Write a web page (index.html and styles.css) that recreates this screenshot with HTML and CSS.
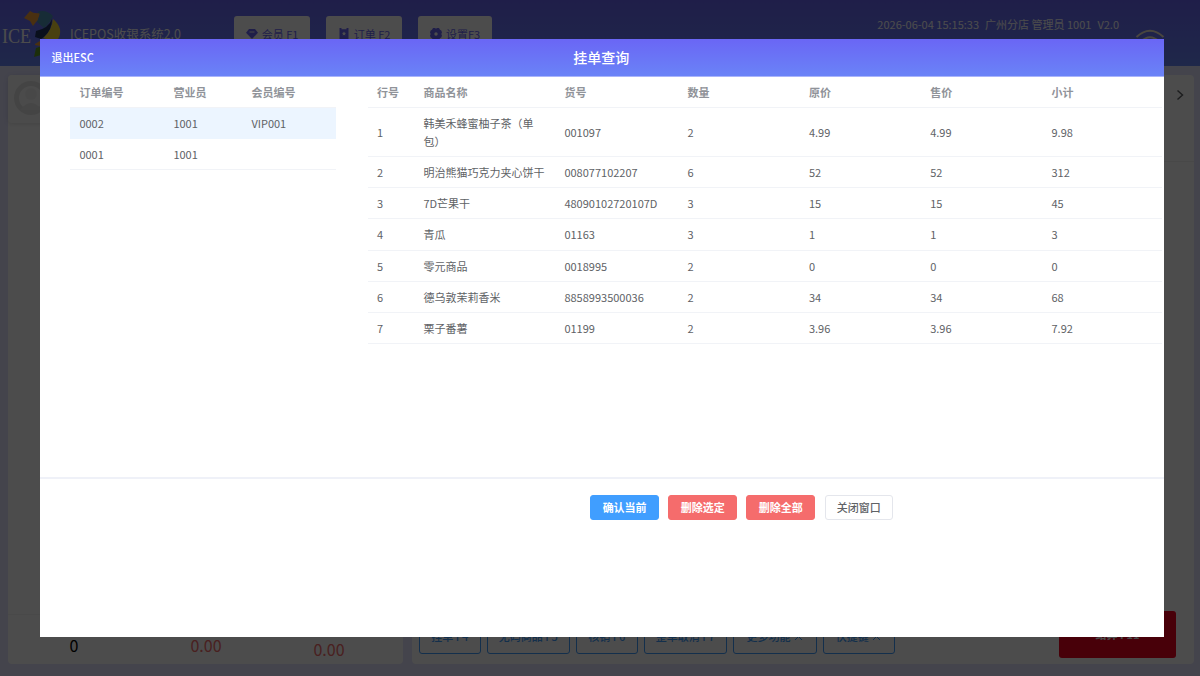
FILE: index.html
```html
<!DOCTYPE html>
<html lang="zh-CN">
<head>
    <meta charset="UTF-8">
    <meta name="viewport" content="width=device-width, initial-scale=1.0">
    <title>ICEPOS收银系统2.0</title>
    <link rel="stylesheet" href="styles.css">
</head>
<body>
    <div class="app">
        <header class="topbar">
            <div class="logo">
                <span class="logo-text">ICE</span>
                <svg class="logo-mark" width="38" height="50" viewBox="0 0 38 50">
                    <path d="M0 8L6 1Q10 4 16 3L14 10L12 12L9 16L6 11Z" fill="#f5a13a"/>
                    <path d="M13 2Q22-1 29 6Q26 13 20 18L13 12L16 4Z" fill="#4f93b4"/>
                    <path d="M29 9Q34 13 36 19Q37 26 33 30Q27 31 19 28Q28 20 29 9Z" fill="#f4d836"/>
                    <path d="M28 9Q25 18 12 21L11 27L17 29L20 27Q28 20 28 9Z" fill="#20345e"/>
                    <path d="M11 34L16 31V36L11 35Z" fill="#f5a13a"/>
                    <path d="M12 38L18 36L17 45L10 47Z" fill="#5f9c22"/>
                </svg>
            </div>
            <h1 class="app-title">ICEPOS收银系统2.0</h1>
            <nav class="nav">
                <button type="button" class="nav-btn">
                    <svg width="12" height="12" viewBox="0 0 12 12"><path d="M3 1h6l3 3.700-6 6.300L0 4.700z" fill="currentColor"/><path d="M3.500 4h5" stroke="#fff" stroke-width=".9"/></svg>
                    会员 F1
                </button>
                <button type="button" class="nav-btn">
                    <svg width="12" height="12" viewBox="0 0 12 12"><path d="M1.500 0h2v1.200h5V0h2v11h-9z" fill="currentColor"/><path d="M6 3.500l.7 1.300 1.300.2-1 1 .3 1.500L6 6.800l-1.300.7L5 6 4 5l1.300-.2z" fill="#fff"/></svg>
                    订单 F2
                </button>
                <button type="button" class="nav-btn nav-btn-set">
                    <svg width="12" height="12" viewBox="0 0 12 12"><path d="M3 0h2l1 .8L7 0h2l1 1.700 1.300.8.7 2-.7 1.500.7 1.500-.7 2-1.300.8L9 12H7l-1-.8-1 .8H3l-1-1.700-1.300-.8L0 7.500.7 6 0 4.500l.7-2L2 1.700z" fill="currentColor"/><circle cx="6" cy="6" r="1.700" fill="#fff"/></svg>
                    设置F3
                </button>
            </nav>
            <div class="session">
                <span>2026-06-04 15:15:33</span>
                <span>广州分店 管理员 1001</span>
                <span>V2.0</span>
            </div>
            <svg class="wifi" width="30" height="24" viewBox="0 0 30 24" fill="none" stroke="#f5ecd2" stroke-width="2">
                <path d="M1.500 8Q15-4.500 28.500 8M6 12.500Q15 4 24 12.500M10.500 17Q15 13 19.500 17"/>
            </svg>
        </header>

        <main class="workspace">
            <section class="panel cart">
                <div class="member">
                    <svg width="36" height="36" viewBox="0 0 36 36">
                        <circle cx="18" cy="18" r="14.500" fill="none" stroke="#e4e4e4" stroke-width="5"/>
                        <circle cx="18" cy="14" r="6" fill="#f2f2f2"/>
                        <path d="M7 30Q18 16 29 30" fill="#e9e9e9"/>
                    </svg>
                </div>
                <div class="totals">
                    <span class="total-qty">0</span>
                    <span class="total-price">0.00</span>
                    <span class="total-pay">0.00</span>
                </div>
            </section>
            <section class="panel goods">
                <div class="category">
                    <svg width="8" height="12" viewBox="0 0 8 12" fill="none" stroke="#606266" stroke-width="1.500"><path d="M1.500 1.500L6.500 6L1.500 10.500"/></svg>
                </div>
                <div class="actions">
                    <button type="button" class="action action-sm">挂单 F4</button>
                    <button type="button" class="action action-lg">无码商品 F5</button>
                    <button type="button" class="action action-sm">核销 F6</button>
                    <button type="button" class="action action-lg">整单取消 F7</button>
                    <button type="button" class="action action-lg">更多功能 <svg width="9" height="6" viewBox="0 0 9 6" fill="none" stroke="currentColor"><path d="M1 5L4.500 1.500L8 5"/></svg></button>
                    <button type="button" class="action action-md">快捷键 <svg width="9" height="6" viewBox="0 0 9 6" fill="none" stroke="currentColor"><path d="M1 5L4.500 1.500L8 5"/></svg></button>
                    <button type="button" class="checkout">结算 F11</button>
                </div>
            </section>
        </main>
    </div>

    <div class="overlay">
        <div class="dialog">
            <div class="dialog-header">
                <span class="dialog-exit">退出ESC</span>
                <h2 class="dialog-title">挂单查询</h2>
            </div>
            <div class="dialog-body">
                <table class="table orders">
                    <thead>
                        <tr><th>订单编号</th><th>营业员</th><th>会员编号</th></tr>
                    </thead>
                    <tbody>
                        <tr class="current"><td>0002</td><td>1001</td><td>VIP001</td></tr>
                        <tr><td>0001</td><td>1001</td><td></td></tr>
                    </tbody>
                </table>
                <table class="table items">
                    <thead>
                        <tr><th>行号</th><th>商品名称</th><th>货号</th><th>数量</th><th>原价</th><th>售价</th><th>小计</th></tr>
                    </thead>
                    <tbody>
                        <tr><td>1</td><td>韩美禾蜂蜜柚子茶（单包）</td><td>001097</td><td>2</td><td>4.99</td><td>4.99</td><td>9.98</td></tr>
                        <tr><td>2</td><td>明治熊猫巧克力夹心饼干</td><td>008077102207</td><td>6</td><td>52</td><td>52</td><td>312</td></tr>
                        <tr><td>3</td><td>7D芒果干</td><td>48090102720107D</td><td>3</td><td>15</td><td>15</td><td>45</td></tr>
                        <tr><td>4</td><td>青瓜</td><td>01163</td><td>3</td><td>1</td><td>1</td><td>3</td></tr>
                        <tr><td>5</td><td>零元商品</td><td>0018995</td><td>2</td><td>0</td><td>0</td><td>0</td></tr>
                        <tr><td>6</td><td>德乌敦茉莉香米</td><td>8858993500036</td><td>2</td><td>34</td><td>34</td><td>68</td></tr>
                        <tr><td>7</td><td>栗子番薯</td><td>01199</td><td>2</td><td>3.96</td><td>3.96</td><td>7.92</td></tr>
                    </tbody>
                </table>
            </div>
            <div class="dialog-footer">
                <button type="button" class="btn btn-primary">确认当前</button>
                <button type="button" class="btn btn-danger">删除选定</button>
                <button type="button" class="btn btn-danger">删除全部</button>
                <button type="button" class="btn">关闭窗口</button>
            </div>
        </div>
    </div>
</body>
</html>
```
FILE: styles.css
```css
* {
    box-sizing: border-box;
}
body {
    margin: 0;
    height: 676px;
    overflow: hidden;
    font-family: "Noto Sans CJK SC", sans-serif;
    font-size: 11px;
    color: #606266;
}
button {
    font-family: inherit;
    font-size: 11px;
    padding: 0;
    white-space: nowrap;
}
h1, h2 {
    margin: 0;
    font-weight: 400;
}

/* cashier screen */
.app {
    display: flex;
    flex-direction: column;
    height: 676px;
    background: #e3e3ff;
}
.topbar {
    display: flex;
    align-items: flex-start;
    height: 66px;
    background: linear-gradient(#6a66f5, #6a85f9);
    color: #fff;
}
.logo {
    display: flex;
    width: 70px;
    padding: 10px 0 0 2px;
}
.logo-text {
    width: 22px;
    padding-top: 14px;
    font-family: "Liberation Serif", serif;
    font-size: 21px;
    line-height: 25px;
    transform: scaleX(0.86);
    transform-origin: left;
}
.logo-mark {
    flex: none;
}
.app-title {
    width: 164px;
    padding-top: 24px;
    font-size: 12.5px;
    line-height: 19px;
}
.nav {
    display: flex;
    gap: 16px;
    padding-top: 16px;
}
.nav-btn {
    display: flex;
    align-items: center;
    justify-content: center;
    gap: 4px;
    width: 76px;
    height: 35px;
    border: none;
    border-radius: 3px;
    background: #fff;
    color: #6a66f5;
}
.nav-btn-set {
    width: 74px;
}
.session {
    display: flex;
    gap: 6px;
    margin-left: auto;
    padding-top: 16px;
    line-height: 16px;
}
.wifi {
    margin: 28.5px 35px 0 16px;
}
.workspace {
    display: flex;
    flex: 1;
    gap: 9px;
    padding: 9px 6px 12px 8px;
}
.panel {
    display: flex;
    flex-direction: column;
    justify-content: space-between;
    border-radius: 4px;
    background: #fff;
}
.cart {
    width: 395px;
}
.member {
    height: 48px;
    padding: 5px;
    border-radius: 4px;
    box-shadow: 0 1px 5px rgba(0, 0, 0, 0.12);
    background: #fbfbfb;
}
.totals {
    display: flex;
    height: 50px;
    padding-top: 18px;
    border-top: 1px solid #f5f5f5;
    font-size: 16px;
    line-height: 24px;
}
.total-qty {
    width: 132px;
    text-align: center;
    color: #000;
}
.total-price {
    width: 132px;
    text-align: center;
    color: #f56c6c;
}
.total-pay {
    width: 114px;
    padding-top: 4px;
    text-align: center;
    color: #f56c6c;
}
.goods {
    flex: 1;
}
.category {
    display: flex;
    justify-content: flex-end;
    height: 87px;
    padding: 14px 10px 0 0;
    border-bottom: 1px solid #f2f2f2;
}
.actions {
    display: flex;
    align-items: flex-end;
    gap: 6px;
    padding: 0 18px 6px 7px;
}
.action {
    height: 34px;
    margin-bottom: 4px;
    padding-bottom: 3px;
    border: 1px solid #409eff;
    border-radius: 3px;
    background: #fff;
    color: #409eff;
    font-weight: 500;
}
.action svg {
    margin-left: 1px;
}
.action-sm {
    width: 61.5px;
}
.action-md {
    width: 72px;
}
.action-lg {
    width: 83.5px;
}
.checkout {
    width: 117px;
    height: 47px;
    margin-left: auto;
    padding-bottom: 2px;
    border: none;
    border-radius: 3px;
    background: #f0001e;
    color: #fff;
    font-weight: 700;
}

/* suspended orders dialog */
.overlay {
    position: fixed;
    inset: 0;
    padding: 39px 36px 39px 39.5px;
    background: rgba(0, 0, 0, 0.7);
}
.dialog {
    height: 598px;
    background: #fff;
}
.dialog-header {
    display: grid;
    grid-template-columns: 1fr auto 1fr;
    align-items: center;
    height: 38px;
    padding: 0 13px 1px 12px;
    border-bottom: 1px solid #a9b4fb;
    background: linear-gradient(#6a66f5, #6a83f7);
    color: #fff;
}
.dialog-exit {
    font-weight: 500;
}
.dialog-title {
    font-size: 14px;
    font-weight: 500;
}
.dialog-body {
    display: flex;
    align-items: flex-start;
    gap: 31.5px;
    height: 402px;
    padding-left: 30.5px;
    border-bottom: 2px solid #eff1f8;
}
.table {
    display: block;
    line-height: 18px;
}
.table tr {
    display: grid;
    align-items: center;
    border-bottom: 1px solid #f1f3f7;
}
.table th,
.table td {
    min-height: 18px;
    margin: 6.1px 0;
    padding: 0 9.4px;
    text-align: left;
}
.table th {
    margin: 5.5px 0 6.3px;
    color: #909399;
    font-weight: 700;
}
.orders {
    width: 266px;
}
.orders tr {
    grid-template-columns: 94px 78px 94px;
}
.items {
    width: 794px;
}
.items tr {
    grid-template-columns: 46.5px 141px 123px 121.5px 121.3px 121.3px 119px;
}
.table thead, .table tbody {
    display: block;
}
.table .current {
    border-bottom-color: #ecf5ff;
    background: #ecf5ff;
}
.dialog-footer {
    display: flex;
    justify-content: center;
    gap: 9.4px;
    padding: 15.5px 0 0 280px;
}
.btn {
    width: 68.7px;
    height: 25.5px;
    border: 1px solid #e4e6ec;
    border-radius: 3px;
    background: #fff;
    color: #606266;
    font-weight: 500;
}
.btn-primary {
    border-color: #409eff;
    background: #409eff;
    color: #fff;
    font-weight: 700;
}
.btn-danger {
    border-color: #f56c6c;
    background: #f56c6c;
    color: #fff;
    font-weight: 700;
}
```
